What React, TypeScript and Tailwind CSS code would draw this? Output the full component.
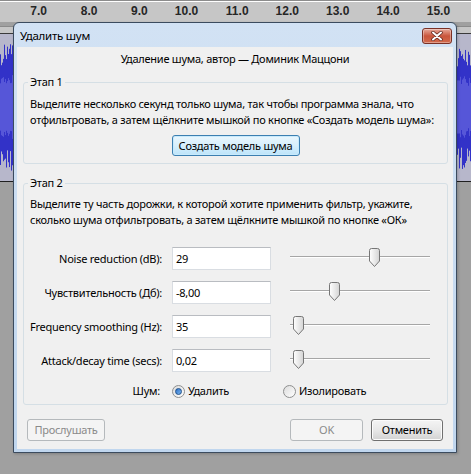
import React from 'react';

const RULER = ['7.0', '8.0', '9.0', '10.0', '11.0', '12.0', '13.0', '14.0', '15.0'];

// deterministic "audio" so the strips either side of the dialog look like a track
let seed = 11;
function rnd() {
  seed = (seed * 9301 + 49297) % 233280;
  return seed / 233280;
}
const BARS = Array.from({ length: 471 }, (_, x) => {
  const env = 60 + 8 * Math.sin(x / 9) * Math.cos(x / 23);
  const top = env * (0.65 + rnd() * 0.35);
  const bottom = env * (0.65 + rnd() * 0.35);
  return { x, top, bottom, rms: env * (0.35 + rnd() * 0.15) };
});

function Waveform() {
  const mid = 73;
  return (
    <svg width="471" height="147" className="block bg-[#b7b7cb]">
      {BARS.map((b) => (
        <line key={`p${b.x}`} x1={b.x + 0.5} x2={b.x + 0.5} y1={mid - b.top} y2={mid + b.bottom} stroke="#3232c8" />
      ))}
      {BARS.map((b) => (
        <line key={`r${b.x}`} x1={b.x + 0.5} x2={b.x + 0.5} y1={mid - b.rms} y2={mid + b.rms} stroke="#5656d8" />
      ))}
    </svg>
  );
}

function Thumb() {
  return (
    <svg width="11" height="19" viewBox="0 0 11 19">
      <defs>
        <linearGradient id="thumb" x1="0" y1="0" x2="1" y2="0">
          <stop offset="0" stopColor="#ffffff" />
          <stop offset="1" stopColor="#d4d4d4" />
        </linearGradient>
      </defs>
      <path d="M0.5 2.5 Q0.5 0.5 2.5 0.5 H8.5 Q10.5 0.5 10.5 2.5 V13 L5.5 18.5 L0.5 13 Z" fill="url(#thumb)" stroke="#767676" />
    </svg>
  );
}

function Slider({ offset }: { offset: number }) {
  return (
    <div className="relative h-[23px] w-[140px]">
      <div className="absolute left-0 right-0 top-[9px] h-[2px] border-t border-[#a6a6a6] bg-white" />
      <div className="absolute top-[1px]" style={{ left: offset }}>
        <Thumb />
      </div>
    </div>
  );
}

function Radio({ checked }: { checked?: boolean }) {
  return (
    <span className="flex h-[13px] w-[13px] items-center justify-center rounded-full border border-[#8e8f8f] bg-linear-to-br from-[#dcdcdc] to-[#ffffff]">
      {checked && (
        <span className="h-[7px] w-[7px] rounded-full border border-[#1d4f8a] bg-linear-to-br from-[#2a6fc9] to-[#7db6ec]" />
      )}
    </span>
  );
}

function Row({ label, value, offset }: { label: string; value: string; offset: number }) {
  return (
    <div className="flex h-[23px] items-center">
      <span className="w-[132px] whitespace-nowrap text-right">{label}</span>
      <div className="ml-[10px] flex h-[23px] w-[99px] items-center border border-[#d9dde2] border-t-[#b9bcc1] bg-white pl-[3px]">
        {value}
      </div>
      <div className="ml-[19px]">
        <Slider offset={offset} />
      </div>
    </div>
  );
}

function CloseButton() {
  return (
    <div className="mt-[5px] flex h-[16px] w-[30px] items-center justify-center rounded-[3px] border border-[#7a3025] bg-linear-to-b from-[#e6a99b] via-[#c9553c] to-[#d26a4c] shadow-[inset_0_0_0_1px_rgba(255,255,255,0.35)]">
      <svg width="12" height="10" viewBox="0 0 12 10">
        <path d="M2 1.5 L10 8.5 M10 1.5 L2 8.5" stroke="#5a2018" strokeWidth="3.4" strokeLinecap="round" />
        <path d="M2 1.5 L10 8.5 M10 1.5 L2 8.5" stroke="#ffffff" strokeWidth="2" strokeLinecap="round" />
      </svg>
    </div>
  );
}

export default function App() {
  return (
    <div className="relative h-[474px] w-[471px] overflow-hidden bg-[#a0a0a0]">
      <div className="flex h-[22px] border-t border-[#8c8c8c] bg-[#c6c6c6]">
        <div className="flex w-full border-t border-white pl-0 font-['Liberation_Sans',sans-serif] text-[12px] font-bold leading-[19px] text-[#262626]">
          <div className="ml-[-3.4px] flex">
            {RULER.map((n) => (
              <span key={n} className="w-[50.4px] text-right">
                {n}
              </span>
            ))}
          </div>
        </div>
      </div>
      <div className="h-[8px] border-b border-[#3a3a3a] bg-[#c6c6c6]">
        <div className="mt-[4px] h-px bg-[#8a8a8a]" />
      </div>
      <Waveform />
      <div className="h-px bg-[#202020]" />

      <div className="absolute left-[13px] top-[22px] flex h-[431px] w-[444px] flex-col rounded-t-[6px] border border-[#3b4b5e] bg-linear-to-b from-[#d2e2f4] to-[#c0d6ee] px-[3px] pb-[3px] font-['Noto_Sans',sans-serif] text-[11px] tracking-[-0.25px] text-black shadow-[1px_1px_3px_rgba(0,0,0,0.2)]">
        <div className="flex h-[24px] items-start justify-between pl-[3px] pr-[1px]">
          <span className="mt-[5px] text-[11.5px] leading-[16px]">Удалить шум</span>
          <CloseButton />
        </div>

        <div className="flex flex-1 flex-col bg-[#f0f0f0] leading-[16px]">
          <div className="pt-[4px] text-center">Удаление шума, автор — Доминик Маццони</div>

          <fieldset className="ml-[6px] mr-[5px] mt-[7px] rounded-[3px] border border-[#d5dfe5] px-[6px] pb-[7px] pt-[6px]">
            <legend className="-ml-[2px] px-[2px]">Этап 1</legend>
            <p className="whitespace-nowrap">
              Выделите несколько секунд только шума, так чтобы программа знала, что
              <br />
              отфильтровать, а затем щёлкните мышкой по кнопке «Создать модель шума»:
            </p>
            <div className="mt-[7px] flex justify-center">
              <button className="flex h-[21px] w-[128px] items-center justify-center rounded-[3px] border border-[#3c7fb1] bg-linear-to-b from-[#eaf6fd] via-[#d7effc] to-[#bce4fa] shadow-[inset_0_0_0_1px_#c8eafc]">
                Создать модель шума
              </button>
            </div>
          </fieldset>

          <fieldset className="ml-[6px] mr-[5px] mt-[11px] rounded-[3px] border border-[#d5dfe5] px-[6px] pb-[5px] pt-[5px]">
            <legend className="-ml-[2px] px-[2px]">Этап 2</legend>
            <p className="whitespace-nowrap">
              Выделите ту часть дорожки, к которой хотите применить фильтр, укажите,
              <br />
              сколько шума отфильтровать, а затем щёлкните мышкой по кнопке «ОК»
            </p>
            <div className="mt-[19px] flex flex-col gap-[11px]">
              <Row label="Noise reduction (dB):" value="29" offset={79} />
              <Row label="Чувствительность (Дб):" value="-8,00" offset={39} />
              <Row label="Frequency smoothing (Hz):" value="35" offset={3} />
              <Row label="Attack/decay time (secs):" value="0,02" offset={3} />
            </div>
            <div className="mt-[11px] flex h-[16px] items-center">
              <span className="w-[130px] text-right">Шум:</span>
              <div className="ml-[12px] flex w-[111px] items-center gap-[3px]">
                <Radio checked />
                <span>Удалить</span>
              </div>
              <div className="flex items-center gap-[3px]">
                <Radio />
                <span>Изолировать</span>
              </div>
            </div>
          </fieldset>

          <div className="mt-[14px] flex px-[10px]">
            <button className="flex h-[22px] w-[78px] items-center justify-center rounded-[3px] border border-[#b5b9bc] bg-[#f4f4f4] text-[#8a8a8a]">
              Прослушать
            </button>
            <div className="flex-1" />
            <button className="flex h-[22px] w-[73px] items-center justify-center rounded-[3px] border border-[#b5b9bc] bg-[#f4f4f4] text-[#8a8a8a]">
              OK
            </button>
            <button className="ml-[8px] flex h-[22px] w-[72px] items-center justify-center rounded-[3px] border border-[#707070] bg-linear-to-b from-[#f4f4f4] via-[#e8e8e8] to-[#d2d2d2] shadow-[inset_0_0_0_1px_#fbfbfb]">
              Отменить
            </button>
          </div>
        </div>
      </div>
    </div>
  );
}
